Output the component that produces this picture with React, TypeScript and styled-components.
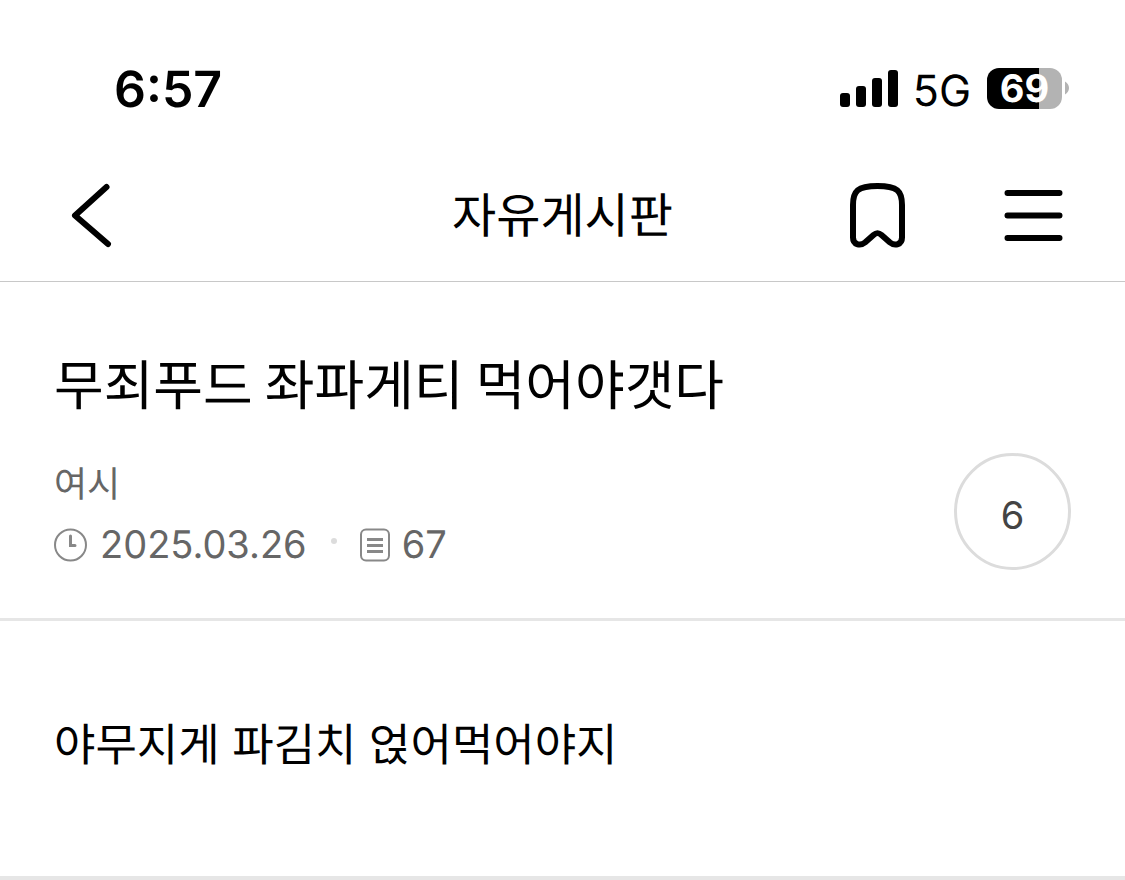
import React from "react";
import styled, { createGlobalStyle } from "styled-components";

const GlobalStyle = createGlobalStyle`
  * { box-sizing: border-box; }
  body {
    margin: 0;
    background: #fff;
    color: #000;
    font-family: Inter, "Noto Sans CJK KR", sans-serif;
    text-rendering: geometricPrecision;
  }
`;

const Page = styled.div`
  display: flex;
  flex-direction: column;
`;

const StatusBar = styled.div`
  display: flex;
  justify-content: space-between;
  align-items: center;
  padding: 60px 56px 31px 114px;
`;

const Clock = styled.time`
  padding-top: 1px;
  font-size: 50px;
  line-height: 58px;
  font-weight: 600;
`;

const Indicators = styled.div`
  display: flex;
  align-items: center;
  padding-bottom: 3px;
`;

const Network = styled.span`
  margin: 6px 16px 0 15px;
  font-size: 43px;
  line-height: 46px;
  font-weight: 400;
`;

const Battery = styled.div`
  display: flex;
  align-items: center;
  gap: 3px;
`;

const BatteryCell = styled.div<{ $level: number }>`
  width: 75px;
  height: 41px;
  border-radius: 12px;
  background: linear-gradient(
    to right,
    #000 ${(p) => p.$level}%,
    #b3b3b3 ${(p) => p.$level}%
  );
  color: #fff;
  font-size: 38px;
  line-height: 42px;
  font-weight: 700;
  text-align: center;
`;

const NavBar = styled.header`
  display: grid;
  grid-template-columns: 1fr auto 1fr;
  align-items: center;
  height: 132px;
  padding: 0 60px 1px;
  border-bottom: 1px solid #c8c8c8;
`;

const IconButton = styled.button`
  display: flex;
  padding: 0;
  border: 0;
  background: none;
  color: inherit;
  cursor: pointer;
`;

const NavActions = styled.div`
  display: flex;
  justify-content: flex-end;
  align-items: center;
  gap: 96px;
`;

const BoardName = styled.div`
  padding-top: 2px;
  font-size: 48px;
  line-height: 70px;
`;

const PostHead = styled.section`
  padding: 61px 54px 42px;
  border-bottom: 3px solid #e6e6e6;
`;

const PostTitle = styled.h1`
  margin: 0;
  font-family: "Noto Sans CJK KR", sans-serif;
  font-size: 54px;
  line-height: 78px;
  font-weight: 400;
`;

const PostInfo = styled.div`
  display: flex;
  justify-content: space-between;
  align-items: flex-start;
  margin-top: 32px;
`;

const Author = styled.div`
  padding-top: 1px;
  color: #666;
  font-size: 36px;
  line-height: 60px;
`;

const Meta = styled.div`
  display: flex;
  align-items: center;
  color: #666;
  font-size: 38px;
  line-height: 62px;
`;

const MetaItem = styled.span`
  display: flex;
  align-items: center;
  gap: 12px;
`;

const Dot = styled.span`
  width: 6px;
  height: 6px;
  margin: 0 23px 8px 24px;
  border-radius: 50%;
  background: #dcdcdc;
`;

const CommentCount = styled.button`
  width: 117px;
  height: 117px;
  padding: 6px 0 0;
  border: 3px solid #dcdcdc;
  border-radius: 50%;
  background: none;
  color: #444;
  font-family: inherit;
  font-size: 38px;
  cursor: pointer;
`;

const PostBody = styled.article`
  padding: 89px 54px 96px;
  border-bottom: 4px solid #e6e6e6;
  font-size: 45px;
  line-height: 70px;

  p { margin: 0; }
`;

const SignalIcon = () => (
  <svg width="58" height="38" viewBox="0 0 58 38" aria-label="signal">
    <rect x="0" y="24" width="10" height="14" rx="3" />
    <rect x="16" y="17" width="10" height="21" rx="3" />
    <rect x="32" y="9" width="10" height="29" rx="3" />
    <rect x="48" y="1" width="10" height="37" rx="3" />
  </svg>
);

const BatteryCap = () => (
  <svg width="4" height="14" viewBox="0 0 4 14">
    <path d="M0 0.5C2.4 1.8 4 4.2 4 7s-1.6 5.200-4 6.500z" fill="#b3b3b3" />
  </svg>
);

const BackIcon = () => (
  <svg width="64" height="68" viewBox="0 0 64 68" fill="none" stroke="currentColor"
    strokeWidth="6" strokeLinecap="round" strokeLinejoin="round">
    <path d="M46.500 6 15 34.500 48 63" />
  </svg>
);

const BookmarkIcon = () => (
  <svg width="56" height="68" viewBox="0 0 56 68" fill="none" stroke="currentColor"
    strokeWidth="6" strokeLinejoin="round">
    <path d="M4 24C4 10 8.500 5 28.500 5S53 10 53 24v32.500c0 7-7 9-12 5l-8.500-7.500c-3-2.600-5-2.600-8 0L16 61.500c-5 4-12 2-12-5z" />
  </svg>
);

const MenuIcon = () => (
  <svg width="64" height="68" viewBox="0 0 64 68" fill="none" stroke="currentColor"
    strokeWidth="6" strokeLinecap="round">
    <path d="M6.500 12h52M6.500 34.500h52M6.500 57h52" />
  </svg>
);

const ClockIcon = () => (
  <svg width="34" height="34" viewBox="0 0 34 34" fill="none" stroke="#888">
    <circle cx="16.500" cy="17" r="15.500" strokeWidth="2" />
    <path d="M16.500 8v9.500H21" strokeWidth="3" strokeLinecap="round" />
  </svg>
);

const DocumentIcon = () => (
  <svg width="30" height="34" viewBox="0 0 30 34" fill="none" stroke="#888">
    <rect x="1" y="1.500" width="28" height="31" rx="5" strokeWidth="2" />
    <path d="M7 11.500h16M7 17.500h16M7 23.500h16" strokeWidth="3" />
  </svg>
);

export default function App() {
  return (
    <Page>
      <GlobalStyle />
      <StatusBar>
        <Clock>6:57</Clock>
        <Indicators>
          <SignalIcon />
          <Network>5G</Network>
          <Battery>
            <BatteryCell $level={69}>69</BatteryCell>
            <BatteryCap />
          </Battery>
        </Indicators>
      </StatusBar>
      <NavBar>
        <IconButton type="button" aria-label="back"><BackIcon /></IconButton>
        <BoardName>자유게시판</BoardName>
        <NavActions>
          <IconButton type="button" aria-label="bookmark"><BookmarkIcon /></IconButton>
          <IconButton type="button" aria-label="menu"><MenuIcon /></IconButton>
        </NavActions>
      </NavBar>
      <main>
        <PostHead>
          <PostTitle>무죄푸드 좌파게티 먹어야갯다</PostTitle>
          <PostInfo>
            <div>
              <Author>여시</Author>
              <Meta>
                <MetaItem><ClockIcon /><time dateTime="2025-03-26">2025.03.26</time></MetaItem>
                <Dot />
                <MetaItem><DocumentIcon />67</MetaItem>
              </Meta>
            </div>
            <CommentCount type="button" aria-label="comments">6</CommentCount>
          </PostInfo>
        </PostHead>
        <PostBody>
          <p>야무지게 파김치 얹어먹어야지</p>
        </PostBody>
      </main>
    </Page>
  );
}
